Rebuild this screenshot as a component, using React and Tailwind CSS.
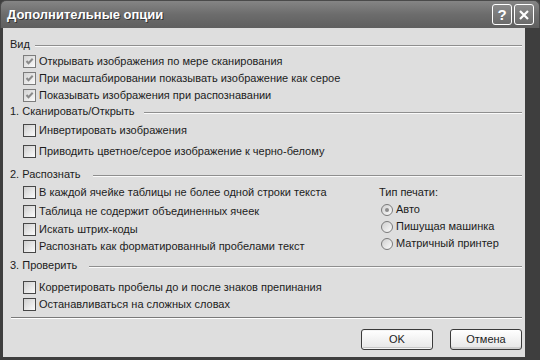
import React from "react";

function Check({ checked, children }) {
  return (
    <div className="flex h-[17px] items-center pl-[20px]">
      <span
        className={
          checked
            ? "relative block h-[13px] w-[13px] border border-[#7c7c7c] bg-gradient-to-br from-[#d2d2d2] to-[#fbfbfb]"
            : "relative block h-[13px] w-[13px] border border-[#474747] bg-gradient-to-br from-[#cfcfcf] to-[#fbfbfb]"
        }
      >
        {checked && (
          <svg width="11" height="11" viewBox="0 0 11 11" className="absolute left-0 top-0">
            <path d="M2.5 5 L4.5 7.2 L8.7 2.8" fill="none" stroke="#8a8a8a" strokeWidth="2" />
          </svg>
        )}
      </span>
      <span className="ml-[3px] whitespace-nowrap">{children}</span>
    </div>
  );
}

function Radio({ checked, children }) {
  return (
    <div className="flex h-[17px] items-center pl-[2px]">
      <span className="relative block h-[12px] w-[12px] rounded-full border border-[#7a7a7a] bg-gradient-to-br from-[#cfcfcf] to-[#fbfbfb]">
        {checked && (
          <span className="absolute left-[3px] top-[3px] block h-[4px] w-[4px] rounded-full bg-[#8c8c8c]" />
        )}
      </span>
      <span className="ml-[3px] whitespace-nowrap">{children}</span>
    </div>
  );
}

function Section({ label, gap, className }) {
  return (
    <div className={"flex h-[14px] items-center pl-[7px] " + (className || "")}>
      <span className="whitespace-nowrap">{label}</span>
      <div className={"flex-1 " + gap}>
        <div className="mt-[2px] h-px bg-[#8e8e8e] shadow-[0_1px_0_#fafafa]" />
      </div>
    </div>
  );
}

export default function App() {
  return (
    <div className="flex h-[360px] w-[540px] flex-col overflow-hidden bg-[#3e3e3e] font-['Liberation_Sans',Arial,sans-serif] text-[11px] text-[#1c1c1c]">
      {/* Title bar */}
      <div className="flex h-[28px] items-center justify-between rounded-t-[6px] border-x border-t border-[#4a4a4a] bg-gradient-to-b from-[#858585] via-[#6c6c6c] to-[#5f5f5f] pl-[6px] pr-[5px]">
        <span className="text-[13px] font-bold text-white [text-shadow:1px_1px_0_#333]">
          Дополнительные опции
        </span>
        <div className="flex gap-[2px]">
          <div className="flex h-[21px] w-[20px] items-center justify-center rounded-[3px] border border-white bg-gradient-to-b from-[#8a8a8a] to-[#6a6a6a] text-[15px] font-bold leading-none text-white">
            ?
          </div>
          <div className="flex h-[21px] w-[20px] items-center justify-center rounded-[3px] border border-white bg-gradient-to-b from-[#8a8a8a] to-[#6a6a6a]">
            <svg width="12" height="12" viewBox="0 0 12 12">
              <path d="M2 2 L10 10 M10 2 L2 10" stroke="white" strokeWidth="2.2" fill="none" />
            </svg>
          </div>
        </div>
      </div>

      {/* Body */}
      <div className="flex flex-1 pb-[3px] pl-[3px]">
        <div className="flex w-[522px] flex-col bg-[#dedede] pr-[3px]">
          <Section label="Вид" gap="ml-[5px]" className="mt-[9px]" />
          <div className="mt-[2px]">
            <Check checked>Открывать изображения по мере сканирования</Check>
            <Check checked>При масштабировании показывать изображение как серое</Check>
            <Check checked>Показывать изображения при распознавании</Check>
          </div>
          <Section label="1. Сканировать/Открыть" gap="ml-[10px]" />
          <div className="mt-[4px]">
            <Check>Инвертировать изображения</Check>
          </div>
          <div className="mt-[4px]">
            <Check>Приводить цветное/серое изображение к черно-белому</Check>
          </div>
          <Section label="2. Распознать" gap="ml-[12px]" className="mt-[7px]" />
          <div className="mt-[3px] flex">
            <div className="w-[376px]">
              <Check>В каждой ячейке таблицы не более одной строки текста</Check>
              <div className="mt-[2px]">
                <Check>Таблица не содержит объединенных ячеек</Check>
              </div>
              <div className="mt-[1px]">
                <Check>Искать штрих-коды</Check>
              </div>
              <Check>Распознать как форматированный пробелами текст</Check>
            </div>
            <div className="flex-1">
              <div className="flex h-[17px] items-center">Тип печати:</div>
              <Radio checked>Авто</Radio>
              <Radio>Пишущая машинка</Radio>
              <Radio>Матричный принтер</Radio>
            </div>
          </div>
          <Section label="3. Проверить" gap="ml-[12px]" className="mt-[3px]" />
          <div className="mt-[7px]">
            <Check>Корретировать пробелы до и после знаков препинания</Check>
            <Check>Останавливаться на сложных словах</Check>
          </div>
          <div className="ml-[8px] mt-[4px] h-px bg-[#7a7a7a] shadow-[0_1px_0_#ffffff]" />
          <div className="mt-[11px] flex justify-end gap-[17px] pr-[0px]">
            <div className="flex h-[21px] w-[72px] items-center justify-center rounded-[3px] border border-[#3a3a3a] bg-gradient-to-b from-[#ffffff] to-[#e6e6e6] shadow-[inset_0_0_0_1px_#f4f4f4,inset_0_-2px_0_#c8c8c8]">
              OK
            </div>
            <div className="flex h-[21px] w-[72px] items-center justify-center rounded-[3px] border border-[#3a3a3a] bg-gradient-to-b from-[#ffffff] to-[#e6e6e6] shadow-[inset_0_-2px_0_#cfcfcf]">
              Отмена
            </div>
          </div>
        </div>
      </div>
    </div>
  );
}
